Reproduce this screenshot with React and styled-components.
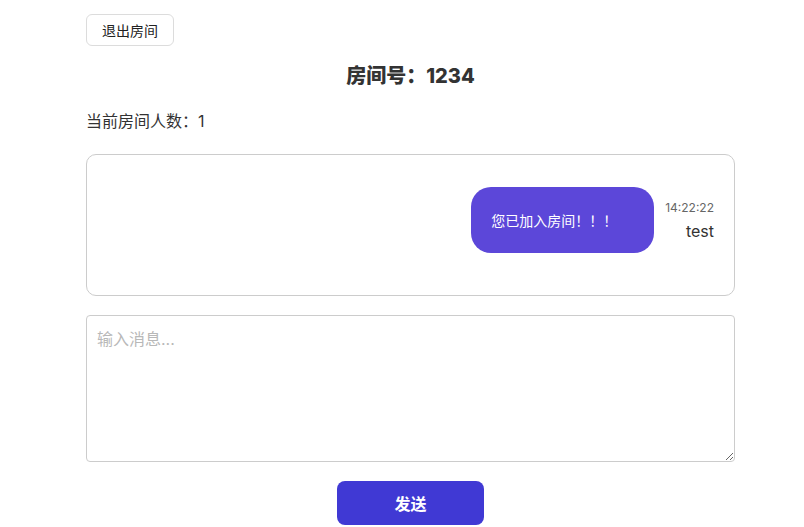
import * as React from "react"
import styled, { createGlobalStyle } from "styled-components"

const GlobalStyle = createGlobalStyle`
  html, body {
    margin: 0;
    padding: 0;
    background: #ffffff;
    font-family: Inter, "Noto Sans CJK SC", sans-serif;
    color: #333333;
  }
`
const Page = styled.div`
  width: 649px;
  margin-left: 86px;
  padding-top: 14px;
  display: flex;
  flex-direction: column;
`
const LeaveButton = styled.button`
  align-self: flex-start;
  width: 88px;
  height: 32px;
  background: #ffffff;
  border: 1px solid #dcdcdc;
  border-radius: 6px;
  font-family: inherit;
  font-size: 14px;
  color: #222222;
  cursor: pointer;
  padding: 0;
`
const Title = styled.h2`
  margin: 16px 0 0 0;
  text-align: center;
  font-size: 20px;
  line-height: 28px;
  font-weight: 800;
  color: #333333;
`
const Count = styled.div`
  margin-top: 20px;
  font-size: 16px;
  line-height: 22px;
  color: #333333;
`
const ChatBox = styled.div`
  margin-top: 22px;
  height: 142px;
  border: 1px solid #cccccc;
  border-radius: 10px;
  box-sizing: border-box;
  padding: 32px 20px 0 20px;
  display: flex;
  flex-direction: column;
  align-items: flex-end;
`
const Message = styled.div`
  display: flex;
  align-items: center;
  gap: 11px;
`
const Bubble = styled.div`
  width: 183px;
  height: 66px;
  box-sizing: border-box;
  padding: 0 20px;
  display: flex;
  align-items: center;
  background: ${p => p.$mine ? "#5c47d9" : "#eeeeee"};
  color: ${p => p.$mine ? "#ffffff" : "#333333"};
  border-radius: 20px;
  font-size: 14px;
`
const Meta = styled.div`
  display: flex;
  flex-direction: column;
  align-items: flex-end;
`
const Time = styled.span`
  font-size: 12px;
  line-height: 16px;
  color: #666666;
`
const User = styled.span`
  margin-top: 5px;
  font-size: 16px;
  line-height: 20px;
  color: #333333;
`
const Input = styled.textarea`
  margin-top: 19px;
  height: 147px;
  box-sizing: border-box;
  border: 1px solid #cccccc;
  border-radius: 4px;
  padding: 10px 10px;
  font-family: inherit;
  font-size: 16px;
  color: #333333;
  outline: none;
  &::placeholder {
    color: #b8b8b8;
  }
`
const SendButton = styled.button`
  align-self: center;
  margin-top: 19px;
  width: 147px;
  height: 44px;
  border: none;
  border-radius: 8px;
  background: #4039d4;
  color: #ffffff;
  font-family: inherit;
  font-size: 16px;
  font-weight: 700;
  cursor: pointer;
`

const messages = [
  { text: "您已加入房间！！！", time: "14:22:22", user: "test", mine: true },
]

const App = () => {
  return (
    <>
      <GlobalStyle />
      <Page>
        <LeaveButton>退出房间</LeaveButton>
        <Title>房间号：1234</Title>
        <Count>当前房间人数：1</Count>
        <ChatBox>
          {messages.map((m, i) => (
            <Message key={i}>
              <Bubble $mine={m.mine}>{m.text}</Bubble>
              <Meta>
                <Time>{m.time}</Time>
                <User>{m.user}</User>
              </Meta>
            </Message>
          ))}
        </ChatBox>
        <Input placeholder="输入消息..." />
        <SendButton>发送</SendButton>
      </Page>
    </>
  )
}
export default App
